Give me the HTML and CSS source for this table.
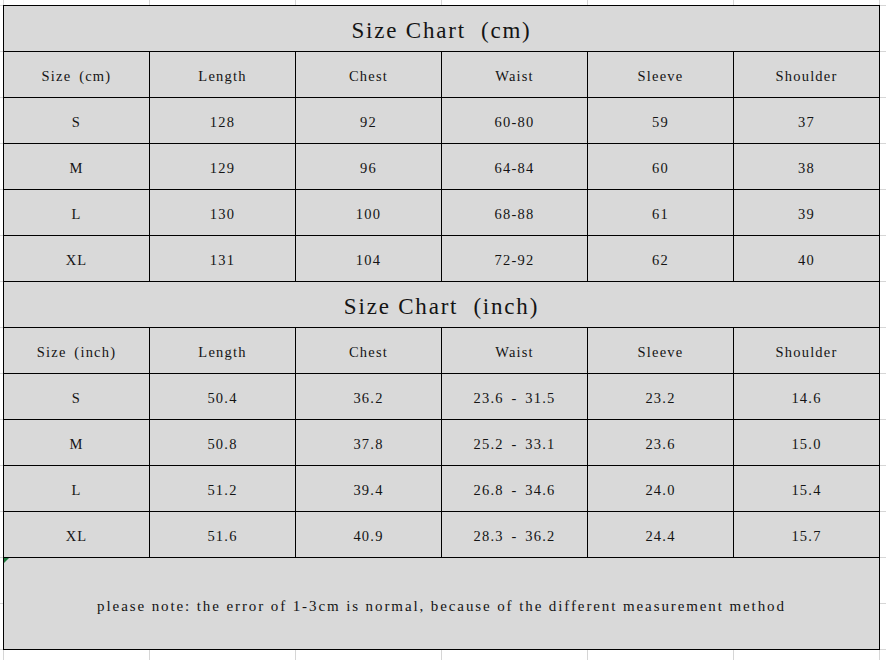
FILE: index.html
```html
<!DOCTYPE html>
<html>
<head>
<meta charset="utf-8">
<link rel="stylesheet" href="styles.css">
</head>
<body>
<div class="sheet">
  <div class="cell title">Size Chart  (cm)</div>
  <div class="cell">Size (cm)</div><div class="cell">Length</div><div class="cell">Chest</div><div class="cell">Waist</div><div class="cell">Sleeve</div><div class="cell">Shoulder</div>
  <div class="cell">S</div><div class="cell">128</div><div class="cell">92</div><div class="cell">60-80</div><div class="cell">59</div><div class="cell">37</div>
  <div class="cell">M</div><div class="cell">129</div><div class="cell">96</div><div class="cell">64-84</div><div class="cell">60</div><div class="cell">38</div>
  <div class="cell">L</div><div class="cell">130</div><div class="cell">100</div><div class="cell">68-88</div><div class="cell">61</div><div class="cell">39</div>
  <div class="cell">XL</div><div class="cell">131</div><div class="cell">104</div><div class="cell">72-92</div><div class="cell">62</div><div class="cell">40</div>
  <div class="cell title">Size Chart  (inch)</div>
  <div class="cell">Size (inch)</div><div class="cell">Length</div><div class="cell">Chest</div><div class="cell">Waist</div><div class="cell">Sleeve</div><div class="cell">Shoulder</div>
  <div class="cell">S</div><div class="cell">50.4</div><div class="cell">36.2</div><div class="cell">23.6 - 31.5</div><div class="cell">23.2</div><div class="cell">14.6</div>
  <div class="cell">M</div><div class="cell">50.8</div><div class="cell">37.8</div><div class="cell">25.2 - 33.1</div><div class="cell">23.6</div><div class="cell">15.0</div>
  <div class="cell">L</div><div class="cell">51.2</div><div class="cell">39.4</div><div class="cell">26.8 - 34.6</div><div class="cell">24.0</div><div class="cell">15.4</div>
  <div class="cell">XL</div><div class="cell">51.6</div><div class="cell">40.9</div><div class="cell">28.3 - 36.2</div><div class="cell">24.4</div><div class="cell">15.7</div>
  <div class="cell note"><span class="marker"></span>please note: the error of 1-3cm is normal, because of the different measurement method</div>
</div>
</body>
</html>
```
FILE: styles.css
```css
html, body {
  margin: 0;
  padding: 0;
}
body {
  width: 886px;
  height: 660px;
  overflow: hidden;
  background-color: #ffffff;
  background-image:
    linear-gradient(to right, #d6d6d6 1px, transparent 1px),
    linear-gradient(to bottom, #d6d6d6 1px, transparent 1px);
  background-size: 146px 46px;
  background-position: 3px 5px;
  font-family: "Liberation Serif", "DejaVu Serif", serif;
  color: #141414;
}
.sheet {
  margin: 5px 0 0 3px;
  width: 877px;
  display: grid;
  grid-template-columns: repeat(6, 145px);
  grid-template-rows: repeat(12, 45px) 91px;
  gap: 1px;
  padding: 1px;
  box-sizing: border-box;
  background: #000;
}
.cell {
  background: #d9d9d9;
  display: flex;
  align-items: center;
  justify-content: center;
  font-size: 14.5px;
  letter-spacing: 1.2px;
  word-spacing: 3px;
  padding-top: 3px;
  box-sizing: border-box;
  white-space: pre;
}
.title {
  grid-column: 1 / -1;
  font-size: 23px;
  letter-spacing: 1.8px;
  word-spacing: 0;
  padding-top: 5px;
}
.note {
  grid-column: 1 / -1;
  position: relative;
  font-size: 15px;
  letter-spacing: 1.9px;
  word-spacing: 0;
  padding-top: 6px;
}
.marker {
  position: absolute;
  left: 0;
  top: 0;
  width: 0;
  height: 0;
  border-top: 5px solid #1f7a3f;
  border-right: 5px solid transparent;
}
```
